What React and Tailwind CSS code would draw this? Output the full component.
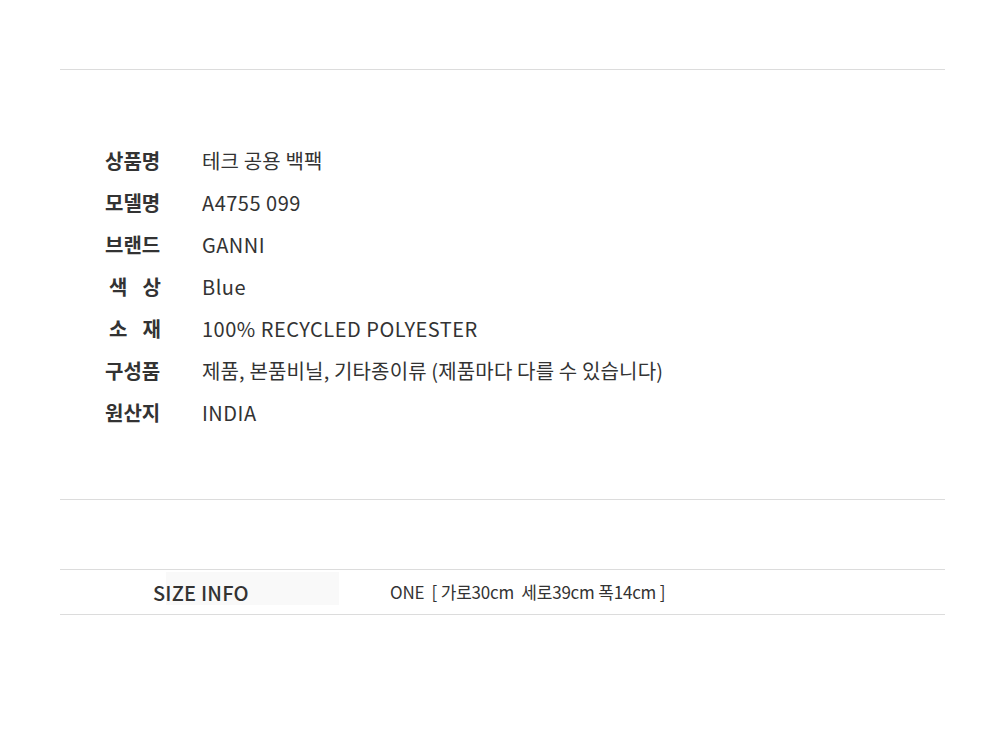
const rows = [
  { label: "상품명", value: "테크 공용 백팩" },
  { label: "모델명", value: "A4755 099", latin: true },
  { label: "브랜드", value: "GANNI", latin: true },
  { label: "색상", value: "Blue", spaced: true, latin: true },
  { label: "소재", value: "100% RECYCLED POLYESTER", spaced: true, latin: true },
  { label: "구성품", value: "제품, 본품비닐, 기타종이류 (제품마다 다를 수 있습니다)" },
  { label: "원산지", value: "INDIA", latin: true },
];

export default function App() {
  return (
    <div
      className="w-[1000px] h-[755px] bg-white text-[#333]"
      style={{ fontFamily: '"Noto Sans CJK KR", "Noto Sans", sans-serif' }}
    >
      <div className="ml-[60px] w-[885px] pt-[69px]">
        {/* product info */}
        <div className="border-t border-[#dcdcdc] pt-[70px] pb-[65px] pl-[45px]">
          {rows.map((row) => (
            <div key={row.label} className="flex items-center h-[42px]">
              <div
                className={`w-[60px] text-[20px] font-bold flex ${
                  row.spaced ? "justify-between px-[4px]" : ""
                }`}
              >
                {row.spaced
                  ? row.label.split("").map((c) => <span key={c}>{c}</span>)
                  : row.label}
              </div>
              <div
                className={`ml-[37px] text-[20px] ${
                  row.latin ? "tracking-[0.5px]" : "tracking-[0.15px]"
                }`}
              >
                {row.value}
              </div>
            </div>
          ))}
        </div>

        {/* size info */}
        <div className="border-t border-[#dcdcdc] pt-[69px]">
          <div className="border-t border-b border-[#dcdcdc] h-[46px] flex items-start">
            <div className="mt-[2px] ml-[106px] w-[173px] h-[33px] bg-[#f9f9f9] flex items-end pb-[2px]">
              <span className="-ml-[13px] text-[20px] leading-none font-medium tracking-[0.2px]">SIZE INFO</span>
            </div>
            <div className="self-center ml-[51px] text-[17px] tracking-[-0.2px] whitespace-pre">
              ONE  [ 가로30cm  세로39cm 폭14cm ]
            </div>
          </div>
        </div>
      </div>
    </div>
  );
}
